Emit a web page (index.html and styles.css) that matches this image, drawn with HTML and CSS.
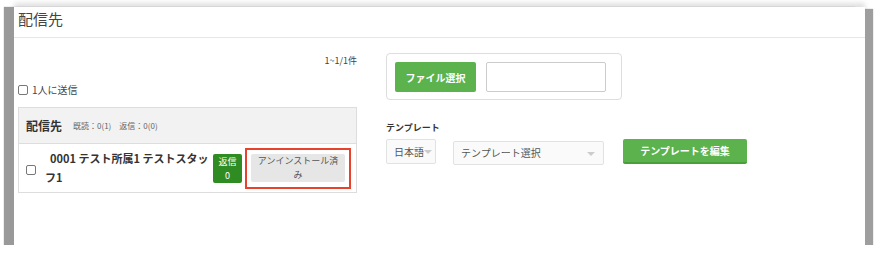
FILE: index.html
```html
<!DOCTYPE html>
<html lang="ja">
<head>
    <meta charset="UTF-8">
    <title>配信先</title>
    <link rel="stylesheet" href="styles.css">
</head>
<body>
    <div class="frame">
        <!-- Header -->
        <div class="frame-head">配信先</div>

        <div class="frame-body">
            <!-- Left: recipients -->
            <div class="left">
                <div class="count">1~1/1件</div>
                <label class="single"><span class="check"></span>1人に送信</label>

                <div class="list">
                    <div class="list-head">
                        <span class="list-title">配信先</span>
                        <span class="list-stats">既読：0(1)　返信：0(0)</span>
                    </div>
                    <div class="list-row">
                        <span class="check row-check"></span>
                        <div class="staff-name">0001 テスト所属1 テストスタッフ1</div>
                        <div class="reply-badge">返信<br>0</div>
                        <div class="status-wrap">
                            <div class="status-btn">アンインストール済<br>み</div>
                        </div>
                    </div>
                </div>
            </div>

            <!-- Right: file & template -->
            <div class="right">
                <div class="file-box">
                    <button class="btn-green btn-file">ファイル選択</button>
                    <div class="file-input"></div>
                </div>
                <div class="tpl-label">テンプレート</div>
                <div class="tpl-row">
                    <div class="select select-lang">日本語<span class="caret"></span></div>
                    <div class="select select-tpl">テンプレート選択<span class="caret"></span></div>
                    <button class="btn-green btn-edit">テンプレートを編集</button>
                </div>
            </div>
        </div>
    </div>
</body>
</html>
```

FILE: styles.css
```css
/* General */
body {
    margin: 0;
    background: #fff;
    font-family: "Noto Sans CJK JP", "Noto Sans", sans-serif;
    color: #333;
}
.frame {
    margin: 7px 0 0 14px;
    width: 851px;
    height: 238px;
    background: #fff;
    box-shadow: -10px 0 1px #999, 8px 2px 1px #9e9e9e, 0 5px 2px #acacac, 0 -4px 5px #e0e0e0;
}
.frame-head {
    height: 30px;
    line-height: 24px;
    padding-left: 4px;
    font-size: 15px;
    color: #444;
    border-bottom: 1px solid #e6e6e6;
}
.frame-body {
    display: flex;
    padding: 0 4px;
}

/* Left column */
.left {
    width: 339px;
}
.count {
    margin-top: 16px;
    text-align: right;
    font-size: 9px;
    line-height: 14px;
    color: #444;
}
.single {
    display: flex;
    align-items: center;
    margin-top: 15px;
    font-size: 10px;
    line-height: 14px;
    color: #444;
}
.check {
    display: inline-block;
    width: 8px;
    height: 8px;
    border: 1px solid #777;
    border-radius: 2px;
    background: #fff;
    margin-right: 4px;
}
.list {
    margin-top: 10px;
    border: 1px solid #ddd;
}
.list-head {
    height: 35px;
    background: #f2f2f2;
    border-bottom: 1px solid #ddd;
    display: flex;
    align-items: center;
    padding-left: 7px;
}
.list-title {
    font-size: 12px;
    font-weight: bold;
    color: #333;
}
.list-stats {
    margin-left: 11px;
    font-size: 8px;
    color: #666;
}
.list-row {
    height: 48px;
    display: flex;
    align-items: center;
    padding-left: 7px;
}
.row-check {
    margin-top: 3px;
    margin-right: 0;
}
.staff-name {
    width: 164px;
    margin-left: 9px;
    font-size: 11px;
    font-weight: bold;
    line-height: 19px;
    color: #333;
    text-indent: 5px;
}
.reply-badge {
    margin-left: 4px;
    width: 29px;
    height: 29px;
    background: #2f8c22;
    color: #fff;
    font-size: 9px;
    line-height: 14px;
    text-align: center;
    border-radius: 2px;
    padding-top: 1px;
    box-sizing: border-box;
}
.status-wrap {
    margin-left: 3px;
    border: 2px solid #e8412c;
    padding: 4px 4px 5px 4px;
}
.status-btn {
    width: 94px;
    height: 28px;
    background: #e6e6e6;
    border-radius: 2px;
    font-size: 9px;
    line-height: 14px;
    text-align: center;
    color: #555;
}

/* Right column */
.right {
    margin-left: 29px;
}
.file-box {
    margin-top: 15px;
    width: 236px;
    height: 47px;
    box-sizing: border-box;
    border: 1px solid #ddd;
    border-radius: 4px;
    padding: 8px;
    display: flex;
}
.btn-green {
    border: none;
    font-family: inherit;
    font-weight: bold;
    color: #fff;
    background: #5cb24d;
    border-radius: 2px;
    padding: 0;
    cursor: pointer;
}
.btn-file {
    width: 81px;
    height: 30px;
    font-size: 10px;
}
.file-input {
    margin-left: 10px;
    width: 120px;
    height: 30px;
    box-sizing: border-box;
    border: 1px solid #ccc;
    border-radius: 2px;
}
.tpl-label {
    margin-top: 21px;
    font-size: 9px;
    font-weight: bold;
    line-height: 14px;
    color: #333;
}
.tpl-row {
    margin-top: 4px;
    display: flex;
    align-items: flex-start;
}
.select {
    position: relative;
    box-sizing: border-box;
    border: 1px solid #e2e2e2;
    border-radius: 2px;
    background: #fafafa;
    color: #555;
    font-size: 10px;
}
.select-lang {
    width: 50px;
    height: 25px;
    line-height: 23px;
    padding-left: 7px;
}
.select-tpl {
    margin-left: 17px;
    margin-top: 2px;
    width: 151px;
    height: 24px;
    line-height: 22px;
    padding-left: 7px;
}
.caret {
    position: absolute;
    top: 10px;
    right: 3px;
    border-left: 4px solid transparent;
    border-right: 4px solid transparent;
    border-top: 4px solid #ccc;
}
.select-tpl .caret {
    right: 8px;
}
.btn-edit {
    margin-left: 19px;
    width: 124px;
    height: 25px;
    font-size: 10px;
    border-bottom: 2px solid #49a03a;
}
```
